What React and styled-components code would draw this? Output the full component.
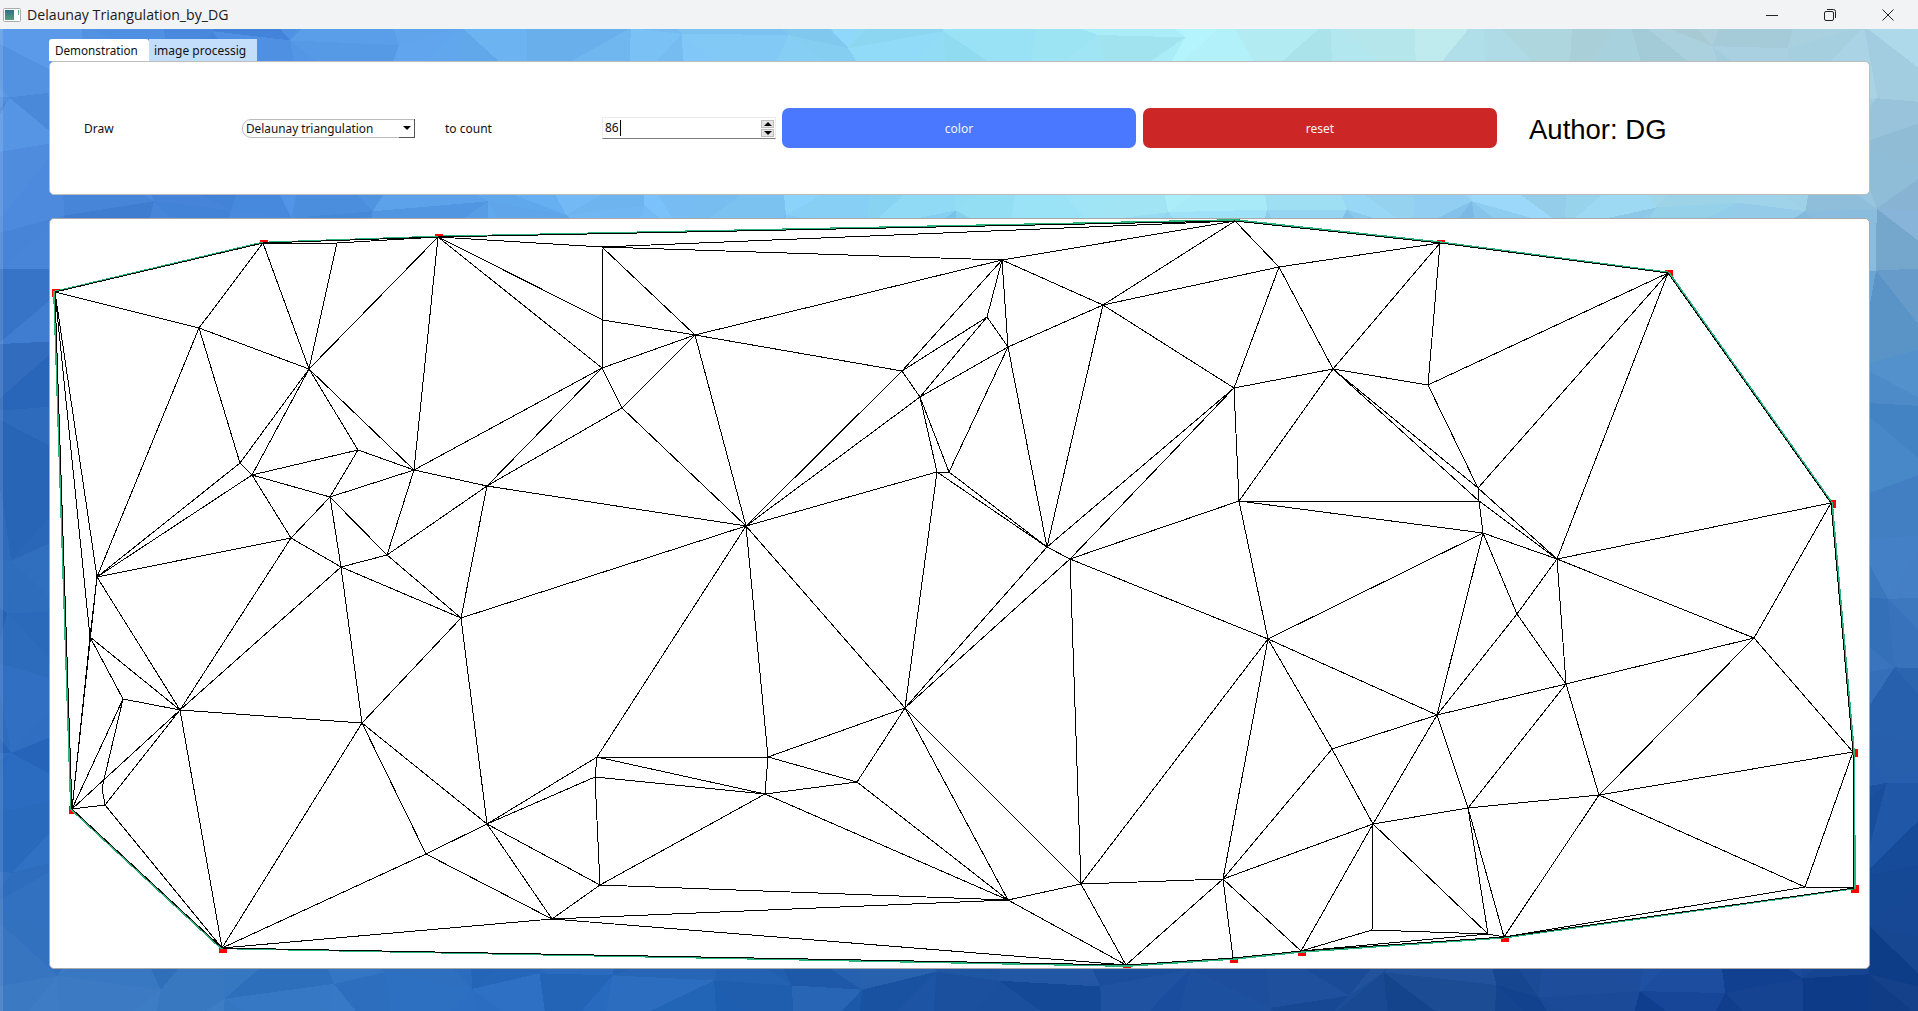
import React from 'react';
import styled, { createGlobalStyle } from 'styled-components';

const GlobalStyle = createGlobalStyle`
    html, body {
        margin: 0;
        height: 100%;
        overflow: hidden;
    }

    #root {
        height: 100%;
    }
`;

const uiFont = `"Noto Sans", "DejaVu Sans", sans-serif`;

/* Window frame. */

const AppWindow = styled.div`
    display: flex;
    flex-direction: column;
    height: 1011px;
    width: 1918px;
`;

const TitleBar = styled.header`
    display: flex;
    align-items: center;
    flex: 0 0 29px;
    padding: 0 1px 0 3px;
    background-color: #f1f3f5;
    color: #1a1a1a;
    font-family: "Open Sans", sans-serif;
    font-size: 14.15px;

    svg {
        display: block;
    }
`;

const Title = styled.span`
    margin-left: 6px;
    flex: 1;
`;

const WindowButton = styled.button`
    display: flex;
    align-items: center;
    justify-content: center;
    width: 58px;
    height: 29px;
    padding: 0;
    border: none;
    background: none;
`;

const Body = styled.main`
    position: relative;
    flex: 1;
    padding: 10px 48px 0 49px;
`;

const WallpaperSvg = styled.svg`
    position: absolute;
    top: 0;
    left: 0;
    display: block;
`;

const Content = styled.div`
    position: relative;
    display: flex;
    flex-direction: column;
`;

/* Tabs. */

const TabRow = styled.div`
    display: flex;
    height: 22px;
`;

const Tab = styled.div`
    display: flex;
    align-items: center;
    width: ${(p) => p.$width}px;
    padding-left: ${(p) => (p.$active ? 6 : 5)}px;
    box-sizing: border-box;
    background-color: ${(p) => (p.$active ? '#ffffff' : '#c3defb')};
    border-radius: ${(p) => (p.$active ? '3px 3px 0 0' : '0')};
    color: #111111;
    font-family: ${uiFont};
    font-size: ${(p) => (p.$active ? 11.7 : 12)}px;
`;

/* Control panel. */

const Panel = styled.section`
    box-sizing: border-box;
    background-color: #ffffff;
    border: 1px solid #bdbdbd;
    border-radius: 5px;
`;

const ControlPanel = styled(Panel)`
    display: flex;
    align-items: center;
    height: 134px;
    padding: 0 0 0 34px;
    font-family: ${uiFont};
    font-size: 12px;
    color: #111111;
`;

const Label = styled.span`
    flex: 0 0 ${(p) => p.$width}px;
`;

const Combo = styled.div`
    display: flex;
    align-items: center;
    justify-content: space-between;
    box-sizing: border-box;
    flex: 0 0 173px;
    height: 19px;
    margin-right: 30px;
    padding-left: 3px;
    border: 1px solid #bbbbbb;
    border-radius: 9px 2px 2px 9px;
    font-size: 11.8px;
`;

const ComboArrow = styled.div`
    display: flex;
    align-items: center;
    justify-content: center;
    box-sizing: border-box;
    width: 16px;
    height: 19px;
    margin: -1px -1px -1px 0;
    border-right: 1px solid #555555;
    border-bottom: 1px solid #555555;

    &::after {
        content: '';
        border-left: 4px solid transparent;
        border-right: 4px solid transparent;
        border-top: 4px solid #000000;
    }
`;

const SpinBox = styled.div`
    display: flex;
    align-items: center;
    justify-content: space-between;
    box-sizing: border-box;
    flex: 0 0 174px;
    height: 22px;
    margin-right: 6px;
    padding: 0 1px 0 2px;
    border: 1px solid #ececec;
    border-bottom: 1px solid #7d7d7d;
`;

const SpinValue = styled.span`
    display: flex;
    align-items: center;
    height: 16px;
    padding-right: 1px;
    border-right: 1px solid #000000;
    line-height: 16px;
`;

const SpinButtons = styled.div`
    display: flex;
    flex-direction: column;
    gap: 1px;
`;

const SpinButton = styled.div`
    display: flex;
    align-items: center;
    justify-content: center;
    width: 13px;
    height: 8px;
    background-color: #e4e4e4;
    border: 1px solid #bdbdbd;
    box-sizing: border-box;

    &::after {
        content: '';
        border-left: 4px solid transparent;
        border-right: 4px solid transparent;
        border-${(p) => (p.$up ? 'bottom' : 'top')}: 4px solid #000000;
    }
`;

const ActionButton = styled.button`
    flex: 0 0 354px;
    height: 40px;
    margin-right: ${(p) => p.$gap}px;
    border: none;
    border-radius: 7px;
    background-color: ${(p) => p.$color};
    color: #f4f4f4;
    font-family: ${uiFont};
    font-size: 12px;
`;

const Author = styled.span`
    padding-top: 3px;
    color: #000000;
    font-family: "Liberation Sans", sans-serif;
    font-size: 27.5px;
`;

/* Triangulation canvas. */

const CanvasPanel = styled(Panel)`
    height: 751px;
    margin-top: 23px;
    border-color: #a9a9a9;
    overflow: hidden;

    svg {
        display: block;
        margin: -1px;
    }
`;

// outer boundary of the point set, clockwise from the top left point
const hull = [
    [55, 292], [263, 243], [438, 237], [1235, 221], [1440, 243], [1668, 273], [1831, 503],
    [1853, 752], [1854, 888], [1504, 937], [1301, 951], [1233, 958], [1126, 965], [222, 948], [72, 809],
];

// one edge per entry: "x1,y1 x2,y2"
const edges = [
    '55,292 199,328', '55,292 90,637', '55,292 97,577', '263,243 199,328', '263,243 309,369', '263,243 337,243',
    '337,243 309,369', '337,243 438,237', '438,237 309,369', '438,237 414,470', '438,237 602,247', '438,237 603,320',
    '438,237 602,368', '199,328 309,369', '199,328 97,577', '199,328 240,463', '309,369 240,463', '309,369 252,475',
    '309,369 358,450', '309,369 414,470', '358,450 414,470', '358,450 252,475', '358,450 330,497', '240,463 252,475',
    '240,463 97,577', '252,475 97,577', '252,475 330,497', '252,475 291,538', '330,497 414,470', '330,497 291,538',
    '330,497 341,567', '330,497 387,555', '291,538 97,577', '291,538 341,567', '291,538 180,710', '341,567 387,555',
    '341,567 180,710', '341,567 362,723', '341,567 461,618', '387,555 414,470', '387,555 461,618', '387,555 487,486',
    '414,470 487,486', '414,470 602,368', '97,577 90,637', '97,577 72,809', '97,577 180,710', '90,637 72,809',
    '90,637 123,699', '90,637 180,710', '123,699 180,710', '123,699 72,809', '123,699 102,788', '102,788 105,805',
    '72,809 105,805', '72,809 180,710', '180,710 105,805', '180,710 222,948', '180,710 362,723', '105,805 222,948',
    '222,948 362,723', '222,948 426,854', '222,948 552,919', '362,723 426,854', '362,723 461,618', '362,723 487,824',
    '426,854 487,824', '426,854 552,919', '461,618 487,486', '461,618 487,824', '461,618 746,526', '487,486 602,368',
    '487,486 622,408', '487,486 746,526', '602,368 603,320', '603,320 602,247', '602,368 622,408', '602,368 695,335',
    '622,408 695,335', '622,408 746,526', '603,320 695,335', '602,247 695,335', '695,335 746,526', '695,335 902,371',
    '695,335 1002,260', '602,247 1002,260', '602,247 1235,221', '902,371 1002,260', '902,371 987,317', '902,371 920,397',
    '902,371 746,526', '920,397 987,317', '920,397 1008,347', '920,397 746,526', '920,397 937,472', '920,397 949,472',
    '937,472 949,472', '937,472 746,526', '937,472 905,708', '937,472 1047,547', '949,472 1047,547', '949,472 1008,347',
    '1002,260 1235,221', '1002,260 1103,305', '1002,260 987,317', '1002,260 1008,347', '987,317 1008,347',
    '1008,347 1103,305', '1008,347 1047,547', '1103,305 1047,547', '1103,305 1234,388', '1103,305 1279,267',
    '1103,305 1235,221', '1235,221 1279,267', '1279,267 1440,243', '1279,267 1234,388', '1279,267 1333,369',
    '1333,369 1440,243', '1333,369 1234,388', '1333,369 1239,501', '1333,369 1428,385', '1428,385 1440,243',
    '1428,385 1668,273', '1428,385 1478,488', '1234,388 1239,501', '1234,388 1047,547', '1234,388 1070,559',
    '1047,547 1070,559', '1047,547 905,708', '1070,559 905,708', '1070,559 1239,501', '1070,559 1081,884',
    '1070,559 1268,639', '1239,501 1479,501', '1239,501 1483,533', '1239,501 1268,639', '1333,369 1478,488',
    '1333,369 1479,501', '1478,488 1557,559', '1479,501 1557,559', '1478,488 1479,501', '1479,501 1483,533',
    '1478,488 1668,273', '1557,559 1668,273', '1483,533 1557,559', '1483,533 1517,614', '1483,533 1268,639',
    '1483,533 1437,715', '1557,559 1517,614', '1557,559 1566,684', '1557,559 1754,638', '1557,559 1831,503',
    '1517,614 1437,715', '1517,614 1566,684', '1268,639 1332,749', '1268,639 1437,715', '1332,749 1373,824',
    '1332,749 1437,715', '1332,749 1223,879', '1373,824 1437,715', '1373,824 1468,808', '1373,824 1223,879',
    '1373,824 1301,951', '1373,824 1372,930', '1373,824 1488,934', '1437,715 1566,684', '1437,715 1468,808',
    '1468,808 1566,684', '1468,808 1599,795', '1468,808 1488,934', '1468,808 1504,937', '1566,684 1599,795',
    '1566,684 1754,638', '1599,795 1754,638', '1599,795 1853,752', '1599,795 1805,887', '1599,795 1504,937',
    '1754,638 1853,752', '1754,638 1831,503', '1805,887 1853,752', '1805,887 1854,888', '1805,887 1504,937',
    '1301,951 1372,930', '1372,930 1488,934', '1301,951 1488,934', '1488,934 1504,937', '1268,639 1223,879',
    '1223,879 1233,958', '1223,879 1301,951', '1223,879 1081,884', '1223,879 1126,965', '1268,639 1081,884',
    '1081,884 1126,965', '1081,884 1008,900', '1008,900 1126,965', '905,708 1081,884', '905,708 1008,900',
    '905,708 768,757', '905,708 857,782', '746,526 905,708', '746,526 768,757', '768,757 765,794', '746,526 597,757',
    '597,757 768,757', '597,757 765,794', '595,777 765,794', '597,757 595,777', '595,777 600,885', '597,757 487,824',
    '595,777 487,824', '487,824 600,885', '487,824 552,919', '600,885 765,794', '600,885 552,919', '600,885 1008,900',
    '552,919 1008,900', '552,919 1126,965', '768,757 857,782', '765,794 857,782', '857,782 1008,900', '765,794 1008,900',
];

const edgePath = edges
    .map((edge) => {
        const [a, b] = edge.split(' ');
        return `M${a.replace(',', ' ')}L${b.replace(',', ' ')}`;
    })
    .join('');

const hullPoints = hull.map((p) => p.join(',')).join(' ');

const hullCx = hull.reduce((sum, p) => sum + p[0], 0) / hull.length;
const hullCy = hull.reduce((sum, p) => sum + p[1], 0) / hull.length;

// green boundary sits just outside of the black one
const outerHullPoints = hull
    .map(([x, y]) => {
        const len = Math.hypot(x - hullCx, y - hullCy);
        return `${x + (1.2 * (x - hullCx)) / len},${y + (1.2 * (y - hullCy)) / len}`;
    })
    .join(' ');

function Triangulation() {
    return (
        <svg width="1821" height="751" viewBox="49 218 1821 751" shapeRendering="crispEdges">
            {hull.map(([x, y]) => (
                <rect key={`${x}-${y}`} x={x - 3} y={y - 3} width="8" height="8" fill="#ff0000" />
            ))}
            <polygon points={outerHullPoints} fill="#ffffff" stroke="#2bb47c" strokeWidth="1.5" />
            <polygon points={hullPoints} fill="none" stroke="#000000" strokeWidth="1" />
            <path d={edgePath} fill="none" stroke="#000000" strokeWidth="1" />
        </svg>
    );
}

/* Low poly wallpaper, coloured from a coarse grid of sampled colours. */

const gridX = [0, 240, 480, 720, 960, 1200, 1440, 1680, 1918];
const gridY = [30, 205, 400, 600, 800, 1011];
const gridColors = [
    ['#5a9ae6', '#4a8ae0', '#68aff0', '#80c6f5', '#96e0f6', '#b0f0f7', '#bde8ea', '#a8cad6', '#aed8e8'],
    ['#4a85d8', '#4889de', '#5fa8ee', '#7cc2f5', '#92ddf5', '#a8eaf6', '#8fcdf4', '#a0dcf0', '#8ab5d5'],
    ['#2a65b8', '#3a78c8', '#4a90d8', '#5aa0e0', '#60a8e0', '#60a0d8', '#5a98d0', '#5090c8', '#4585c5'],
    ['#2a68b8', '#2a68b8', '#3070c0', '#3a78c0', '#3a78c0', '#3a78c0', '#3a78c0', '#3a78c0', '#3f7ac0'],
    ['#2a6ac0', '#2a68b8', '#2868b8', '#2a64b0', '#2a60a8', '#2858a8', '#2858a8', '#2055a5', '#1e55a5'],
    ['#3a78c0', '#3a7cc4', '#2a6cc0', '#2566b8', '#1c52a0', '#1a4c9c', '#1a4a90', '#164496', '#103c85'],
];

const toRgb = (hex) => [1, 3, 5].map((i) => parseInt(hex.slice(i, i + 2), 16));

const bracket = (list, value) => {
    let i = 0;
    while (i < list.length - 2 && value > list[i + 1]) i += 1;
    const t = Math.min(1, Math.max(0, (value - list[i]) / (list[i + 1] - list[i])));
    return [i, t];
};

const sampleColor = (x, y, shade) => {
    const [col, tx] = bracket(gridX, x);
    const [row, ty] = bracket(gridY, y);
    const a = toRgb(gridColors[row][col]);
    const b = toRgb(gridColors[row][col + 1]);
    const c = toRgb(gridColors[row + 1][col]);
    const d = toRgb(gridColors[row + 1][col + 1]);
    const mix = a.map((v, i) => {
        const top = v + (b[i] - v) * tx;
        const bottom = c[i] + (d[i] - c[i]) * tx;
        return Math.round(top + (bottom - top) * ty + shade);
    });
    return `rgb(${mix.join(',')})`;
};

function makeWallpaper() {
    let seed = 1234;
    const random = () => {
        seed = (seed * 1664525 + 1013904223) % 4294967296;
        return seed / 4294967296;
    };
    const cellW = 78;
    const cellH = 64;
    const rows = 18;
    const cols = 27;
    const points = [];
    for (let r = 0; r <= rows; r += 1) {
        const line = [];
        for (let c = 0; c <= cols; c += 1) {
            line.push([(c - 1) * cellW + (random() - 0.5) * 46, (r - 1) * cellH + 29 + (random() - 0.5) * 40]);
        }
        points.push(line);
    }
    const triangles = [];
    const addTriangle = (a, b, c) => {
        const cx = (a[0] + b[0] + c[0]) / 3;
        const cy = (a[1] + b[1] + c[1]) / 3;
        triangles.push({ points: [a, b, c].map((p) => p.join(',')).join(' '), fill: sampleColor(cx, cy, (random() - 0.5) * 14) });
    };
    for (let r = 0; r < rows; r += 1) {
        for (let c = 0; c < cols; c += 1) {
            const a = points[r][c];
            const b = points[r][c + 1];
            const d = points[r + 1][c];
            const e = points[r + 1][c + 1];
            if (random() > 0.5) {
                addTriangle(a, b, d);
                addTriangle(b, e, d);
            } else {
                addTriangle(a, b, e);
                addTriangle(a, e, d);
            }
        }
    }
    return triangles;
}

const wallpaper = makeWallpaper();

function Wallpaper() {
    return (
        <WallpaperSvg width="1918" height="982" viewBox="0 29 1918 982" shapeRendering="crispEdges">
            {wallpaper.map((t) => (
                <polygon key={t.points} points={t.points} fill={t.fill} />
            ))}
            <rect x="0" y="29" width="3" height="982" fill="#ffffff" fillOpacity="0.12" />
        </WallpaperSvg>
    );
}

function AppIcon() {
    return (
        <svg width="18" height="14" viewBox="0 0 18 14">
            <defs>
                <linearGradient id="iconFill" x1="0" y1="0" x2="0" y2="1">
                    <stop offset="0" stopColor="#2f6f86" />
                    <stop offset="1" stopColor="#5b9a7c" />
                </linearGradient>
            </defs>
            <rect x="0.5" y="0.5" width="17" height="13" rx="1" fill="#ffffff" stroke="#a8acae" />
            <rect x="2" y="2" width="9" height="10" fill="url(#iconFill)" />
            <rect x="15" y="2" width="1" height="5" fill="#5eb58c" />
        </svg>
    );
}

function App() {
    return (
        <AppWindow>
            <GlobalStyle />
            <TitleBar>
                <AppIcon />
                <Title>Delaunay Triangulation_by_DG</Title>
                <WindowButton aria-label="minimize">
                    <svg width="12" height="12" viewBox="0 0 12 12">
                        <path d="M0 6.5H12" stroke="#222222" fill="none" />
                    </svg>
                </WindowButton>
                <WindowButton aria-label="restore">
                    <svg width="12" height="12" viewBox="0 0 12 12">
                        <rect x="0.5" y="2.5" width="9" height="9" rx="1.5" stroke="#222222" fill="none" />
                        <path d="M3 0.5H9.5a2 2 0 0 1 2 2V9" stroke="#222222" fill="none" />
                    </svg>
                </WindowButton>
                <WindowButton aria-label="close">
                    <svg width="12" height="12" viewBox="0 0 12 12">
                        <path d="M0.5 0.5L11.5 11.5M11.5 0.5L0.5 11.5" stroke="#222222" fill="none" />
                    </svg>
                </WindowButton>
            </TitleBar>
            <Body>
                <Wallpaper />
                <Content>
                    <TabRow>
                        <Tab $active $width={100}>Demonstration</Tab>
                        <Tab $width={108}>image processig</Tab>
                    </TabRow>
                    <ControlPanel>
                        <Label $width={158}>Draw</Label>
                        <Combo>
                            Delaunay triangulation
                            <ComboArrow />
                        </Combo>
                        <Label $width={157}>to count</Label>
                        <SpinBox>
                            <SpinValue>86</SpinValue>
                            <SpinButtons>
                                <SpinButton $up />
                                <SpinButton />
                            </SpinButtons>
                        </SpinBox>
                        <ActionButton $color="#4a78ff" $gap={7}>color</ActionButton>
                        <ActionButton $color="#cd2626" $gap={32}>reset</ActionButton>
                        <Author>Author: DG</Author>
                    </ControlPanel>
                    <CanvasPanel>
                        <Triangulation />
                    </CanvasPanel>
                </Content>
            </Body>
        </AppWindow>
    );
}

export default App;
